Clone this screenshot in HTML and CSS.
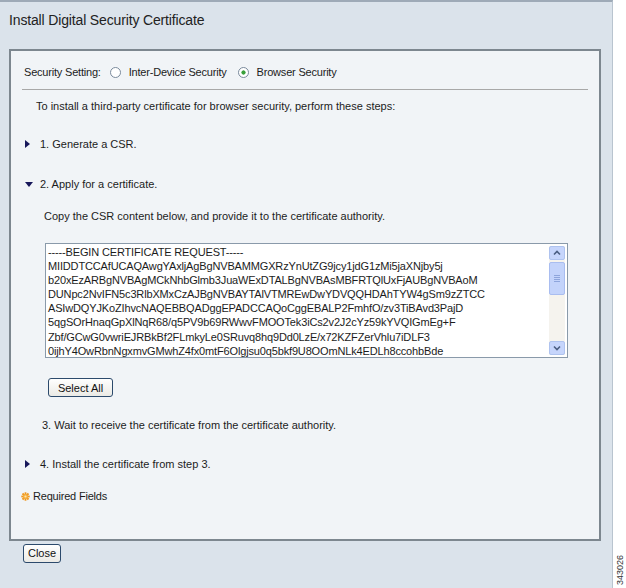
FILE: index.html
```html
<!DOCTYPE html>
<html lang="en">
<head>
    <meta charset="UTF-8">
    <meta name="viewport" content="width=device-width, initial-scale=1.0">
    <title>Install Digital Security Certificate</title>
    <link rel="stylesheet" href="styles.css">
</head>
<body>

<div class="page">
    <div class="window">
        <h1 class="title">Install Digital Security Certificate</h1>

        <div class="panel">
            <!-- Security setting radios -->
            <div class="setting-row">
                <span class="setting-label">Security Setting:</span>
                <span class="radio"></span>
                <span class="radio-text">Inter-Device Security</span>
                <span class="radio checked"></span>
                <span class="radio-text">Browser Security</span>
            </div>
            <div class="rule"></div>

            <p class="intro">To install a third-party certificate for browser security, perform these steps:</p>

            <div class="step step-first"><span class="tri-right"></span>1. Generate a CSR.</div>
            <div class="step step-open"><span class="tri-down"></span>2. Apply for a certificate.</div>

            <p class="copy-text">Copy the CSR content below, and provide it to the certificate authority.</p>

            <div class="csr-box">
                <div class="csr-text">-----BEGIN CERTIFICATE REQUEST-----
MIIDDTCCAfUCAQAwgYAxljAgBgNVBAMMGXRzYnUtZG9jcy1jdG1zMi5jaXNjby5j
b20xEzARBgNVBAgMCkNhbGlmb3JuaWExDTALBgNVBAsMBFRTQlUxFjAUBgNVBAoM
DUNpc2NvIFN5c3RlbXMxCzAJBgNVBAYTAlVTMREwDwYDVQQHDAhTYW4gSm9zZTCC
ASIwDQYJKoZIhvcNAQEBBQADggEPADCCAQoCggEBALP2FmhfO/zv3TiBAvd3PajD
5qgSOrHnaqGpXlNqR68/q5PV9b69RWwvFMOOTek3iCs2v2J2cYz59kYVQIGmEg+F
Zbf/GCwG0vwriEJRBkBf2FLmkyLe0SRuvq8hq9Dd0LzE/x72KZFZerVhlu7iDLF3
0ijhY4OwRbnNgxmvGMwhZ4fx0mtF6Olgjsu0q5bkf9U8OOmNLk4EDLh8ccohbBde</div>
                <div class="scrollbar">
                    <div class="sb-btn">
                        <svg width="8" height="6" viewBox="0 0 8 6"><path d="M1 4.5 L4 1.5 L7 4.5" fill="none" stroke="#4a5d82" stroke-width="1.6"/></svg>
                    </div>
                    <div class="sb-thumb">
                        <span></span><span></span><span></span><span></span>
                    </div>
                    <div class="sb-track"></div>
                    <div class="sb-btn">
                        <svg width="8" height="6" viewBox="0 0 8 6"><path d="M1 1.5 L4 4.5 L7 1.5" fill="none" stroke="#4a5d82" stroke-width="1.6"/></svg>
                    </div>
                </div>
            </div>

            <button class="btn select-all">Select All</button>

            <p class="step3">3. Wait to receive the certificate from the certificate authority.</p>

            <div class="step step-last"><span class="tri-right"></span>4. Install the certificate from step 3.</div>

            <div class="required">
                <svg width="9" height="9" viewBox="0 0 9 9">
                    <g stroke="#ef961c" stroke-width="1.8">
                        <line x1="4.5" y1="0.3" x2="4.5" y2="8.7"/>
                        <line x1="0.3" y1="4.5" x2="8.7" y2="4.5"/>
                        <line x1="1.5" y1="1.5" x2="7.5" y2="7.5"/>
                        <line x1="7.5" y1="1.5" x2="1.5" y2="7.5"/>
                    </g>
                    <circle cx="4.5" cy="4.5" r="2.6" fill="#f5ad3e"/>
                    <circle cx="4.5" cy="4.5" r="1.1" fill="#ffe6ad"/>
                </svg>
                Required Fields
            </div>
        </div>

        <div class="footer">
            <button class="btn close">Close</button>
        </div>
    </div>

    <div class="strip">
        <span class="fig-id">343026</span>
    </div>
</div>

</body>
</html>
```

FILE: styles.css
```css
/* Page frame */
body {
    margin: 0;
    font-family: "Liberation Sans", Arial, sans-serif;
    color: #1c1c1c;
    background: #fff;
}
.page {
    display: flex;
    height: 588px;
}
.window {
    width: 613px;
    box-sizing: border-box;
    background: #dbe3eb;
    border-top: 2px solid #9eaab7;
    border-right: 1px solid #b9c4cf;
}
.strip {
    flex: 1;
    display: flex;
    align-items: flex-end;
    justify-content: center;
    padding-bottom: 3px;
}
.fig-id {
    writing-mode: vertical-rl;
    transform: rotate(180deg);
    font-size: 9px;
    color: #333;
}

/* Title */
.title {
    margin: 0;
    height: 47px;
    box-sizing: border-box;
    padding: 10px 0 0 9px;
    font-size: 14px;
    line-height: 16px;
    letter-spacing: -0.15px;
    font-weight: normal;
    color: #222;
}

/* Inner panel */
.panel {
    margin-left: 9px;
    width: 592px;
    box-sizing: border-box;
    background: #f1f4f7;
    border: 2px solid #7d878f;
    padding: 14px 0 36px 13px;
    font-size: 11px;
    line-height: 14px;
}
.panel p {
    margin: 0;
}

.setting-row {
    display: flex;
    align-items: center;
    height: 14px;
    letter-spacing: -0.2px;
}
.setting-label {
    margin-right: 9px;
}
.radio {
    width: 11px;
    height: 11px;
    box-sizing: border-box;
    border: 1px solid #7a8a9c;
    border-radius: 50%;
    background: #fff;
}
.radio.checked {
    background: radial-gradient(circle, #39a03a 0 1.8px, #fff 2.4px);
}
.radio-text {
    margin: 0 11px 0 8px;
}

.rule {
    margin: 10px 0 0 -2px;
    width: 566px;
    border-top: 1px solid #a8a8a8;
}

.intro {
    margin-top: 9px !important;
    padding-left: 12px;
}

/* Steps */
.step {
    display: flex;
    align-items: center;
    height: 14px;
    padding-left: 1px;
}
.step-first { margin-top: 24px; }
.step-open { margin-top: 26px; }
.step-last { margin-top: 25px; }
.tri-right {
    width: 0;
    height: 0;
    border-left: 5px solid #17175a;
    border-top: 4px solid transparent;
    border-bottom: 4px solid transparent;
    margin-right: 10px;
}
.tri-down {
    width: 0;
    height: 0;
    border-top: 5px solid #17175a;
    border-left: 4px solid transparent;
    border-right: 4px solid transparent;
    margin-right: 7px;
}

.copy-text {
    margin-top: 18px !important;
    padding-left: 20px;
}

/* CSR box with its scroll bar */
.csr-box {
    display: flex;
    margin: 20px 0 0 21px;
    width: 523px;
    height: 115px;
    box-sizing: border-box;
    border: 1px solid #8a9aaa;
    background: #fff;
    overflow: hidden;
}
.csr-text {
    flex: 1;
    white-space: pre;
    overflow: hidden;
    padding: 1px 0 0 2px;
    line-height: 14.1px;
    letter-spacing: -0.15px;
}
.scrollbar {
    display: flex;
    flex-direction: column;
    width: 16px;
    margin: 2px 2px 2px 0;
    background: #f5f3ee;
}
.sb-btn {
    height: 12px;
    display: flex;
    align-items: center;
    justify-content: center;
    background: #c6d5fc;
    border: 1px solid #afc3ef;
    border-radius: 2px;
}
.sb-thumb {
    height: 31px;
    margin-top: 2px;
    display: flex;
    flex-direction: column;
    align-items: center;
    justify-content: center;
    gap: 1px;
    background: #c3d3fb;
    border: 1px solid #a9bdf0;
    border-radius: 2px;
}
.sb-thumb span {
    width: 6px;
    height: 1px;
    background: #8ea5dc;
}
.sb-track {
    flex: 1;
}

/* Buttons */
.btn {
    font-family: "Liberation Sans", Arial, sans-serif;
    font-size: 11px;
    color: #111;
    background: linear-gradient(#ffffff, #ebeae5);
    border: 1px solid #2c4a6c;
    border-radius: 3px;
    padding: 0;
    cursor: pointer;
}
.select-all {
    display: block;
    margin: 20px 0 0 24px;
    width: 65px;
    height: 19px;
}

.step3 {
    margin-top: 21px !important;
    padding-left: 18px;
}

.required {
    display: flex;
    align-items: center;
    gap: 3px;
    height: 14px;
    margin: 18px 0 0 -3px;
    letter-spacing: -0.2px;
}

.footer {
    padding: 2px 0 0 23px;
}
.close {
    width: 38px;
    height: 19px;
}
```
